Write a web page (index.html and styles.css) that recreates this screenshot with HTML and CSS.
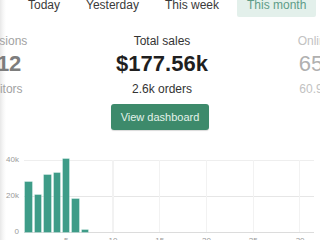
FILE: index.html
```html
<!DOCTYPE html>
<html>
<head>
<meta charset="utf-8">
<link rel="stylesheet" href="styles.css">
</head>
<body>
<nav class="tabs">
  <span class="tab">Today</span>
  <span class="tab">Yesterday</span>
  <span class="tab">This week</span>
  <span class="tab active">This month</span>
</nav>
<section class="stats">
  <div class="stat side left">
    <div class="label">Sessions</div>
    <div class="value">412</div>
    <div class="sub">Visitors</div>
  </div>
  <div class="stat main">
    <div class="label">Total sales</div>
    <div class="value">$177.56k</div>
    <div class="sub">2.6k orders</div>
  </div>
  <div class="stat side right">
    <div class="label">Online store</div>
    <div class="value">65.2%</div>
    <div class="sub">60.9% prior</div>
  </div>
</section>
<div class="actions"><button class="btn">View dashboard</button></div>
<section class="chart">
  <div class="yaxis"><span>40k</span><span>20k</span><span>0</span></div>
  <div class="plotwrap">
    <div class="plot">
      <div class="slot"><i class="bar" style="height:50px"></i></div>
      <div class="slot"><i class="bar" style="height:37px"></i></div>
      <div class="slot"><i class="bar" style="height:57px"></i></div>
      <div class="slot"><i class="bar" style="height:59px"></i></div>
      <div class="slot tick"><i class="bar" style="height:73px"></i></div>
      <div class="slot"><i class="bar" style="height:33px"></i></div>
      <div class="slot"><i class="bar" style="height:2px"></i></div>
      <div class="slot"></div>
      <div class="slot"></div>
      <div class="slot tick"></div>
      <div class="slot"></div>
      <div class="slot"></div>
      <div class="slot"></div>
      <div class="slot"></div>
      <div class="slot tick"></div>
      <div class="slot"></div>
      <div class="slot"></div>
      <div class="slot"></div>
      <div class="slot"></div>
      <div class="slot tick"></div>
      <div class="slot"></div>
      <div class="slot"></div>
      <div class="slot"></div>
      <div class="slot"></div>
      <div class="slot tick"></div>
      <div class="slot"></div>
      <div class="slot"></div>
      <div class="slot"></div>
      <div class="slot"></div>
      <div class="slot tick"></div>
      <div class="slot"></div>
    </div>
    <div class="xaxis">
      <span></span><span></span><span></span><span></span><span>5</span>
      <span></span><span></span><span></span><span></span><span>10</span>
      <span></span><span></span><span></span><span></span><span>15</span>
      <span></span><span></span><span></span><span></span><span>20</span>
      <span></span><span></span><span></span><span></span><span>25</span>
      <span></span><span></span><span></span><span></span><span>30</span>
      <span></span>
    </div>
  </div>
</section>
</body>
</html>
```
FILE: styles.css
```css
html, body {
  margin: 0;
  padding: 0;
  width: 320px;
  height: 240px;
  overflow: hidden;
}
body {
  font-family: "Liberation Sans", Arial, sans-serif;
  color: #333;
  background: linear-gradient(to right, #e8e8e8 0, #f6f6f6 3px, #fff 6px);
}
.tabs {
  display: flex;
  gap: 6px;
  margin: -10px 0 0 18px;
}
.tab {
  font-size: 12px;
  line-height: 14px;
  padding: 8px 10px 5px;
  color: #3a3a3a;
  white-space: nowrap;
  border-radius: 0 0 2px 2px;
}
.tab.active {
  margin-left: 2px;
  background: #e3f0eb;
  color: #5e9c88;
}
.stats {
  display: flex;
  margin: 17px 0 0 -77px;
}
.stat {
  text-align: center;
  white-space: nowrap;
  flex: none;
}
.left { width: 160px; }
.main { width: 158px; }
.right { width: 178px; }
.label {
  font-size: 12px;
  line-height: 14px;
}
.value {
  font-size: 22px;
  line-height: 26px;
  font-weight: bold;
  margin-top: 3px;
}
.sub {
  font-size: 12px;
  line-height: 14px;
  margin-top: 5px;
}
.main .label, .main .sub { color: #333; }
.main .value { color: #1f1f1f; }
.left .label, .left .sub { color: #a2a2a2; }
.left .value { color: #7d7d7d; }
.right .label, .right .sub { color: #c2c2c2; }
.right .value { color: #b0b0b0; font-weight: normal; }
.actions {
  display: flex;
  justify-content: center;
  margin-top: 8px;
}
.btn {
  font-family: inherit;
  font-size: 11px;
  line-height: 14px;
  padding: 6px 10px;
  border: 0;
  border-radius: 3px;
  background: #3d8a6b;
  color: #e3f3ea;
  box-shadow: 0 1px 1px rgba(0,0,0,0.15);
}
.chart {
  display: grid;
  grid-template-columns: 24px 290px;
  margin-top: 25px;
}
.yaxis {
  display: flex;
  flex-direction: column;
  justify-content: space-between;
  align-items: flex-end;
  height: 82px;
  padding-right: 5px;
  font-size: 8px;
  line-height: 10px;
  color: #9a9a9a;
}
.plotwrap {
  padding-top: 5px;
}
.plot {
  display: flex;
  height: 72px;
  border-bottom: 1px solid #dcdcdc;
  background:
    linear-gradient(#eeeeee, #eeeeee) 0 0 / 100% 1px no-repeat,
    linear-gradient(#e6e6e6, #e6e6e6) 0 36px / 100% 1px no-repeat;
}
.slot {
  flex: 1;
  display: flex;
  align-items: flex-end;
  justify-content: center;
}
.slot.tick {
  background: linear-gradient(to right, transparent calc(50% - 0.5px), #f2f2f2 calc(50% - 0.5px), #f2f2f2 calc(50% + 0.5px), transparent calc(50% + 0.5px));
}
.bar {
  display: block;
  width: 6.5px;
  background: #3e9c88;
  box-shadow: 0 0 0 0.5px #7cc0b1;
}
.xaxis {
  display: flex;
  margin-top: 3px;
  font-size: 8px;
  line-height: 10px;
  color: #999;
}
.xaxis span {
  flex: 1;
  text-align: center;
  white-space: nowrap;
}
```
